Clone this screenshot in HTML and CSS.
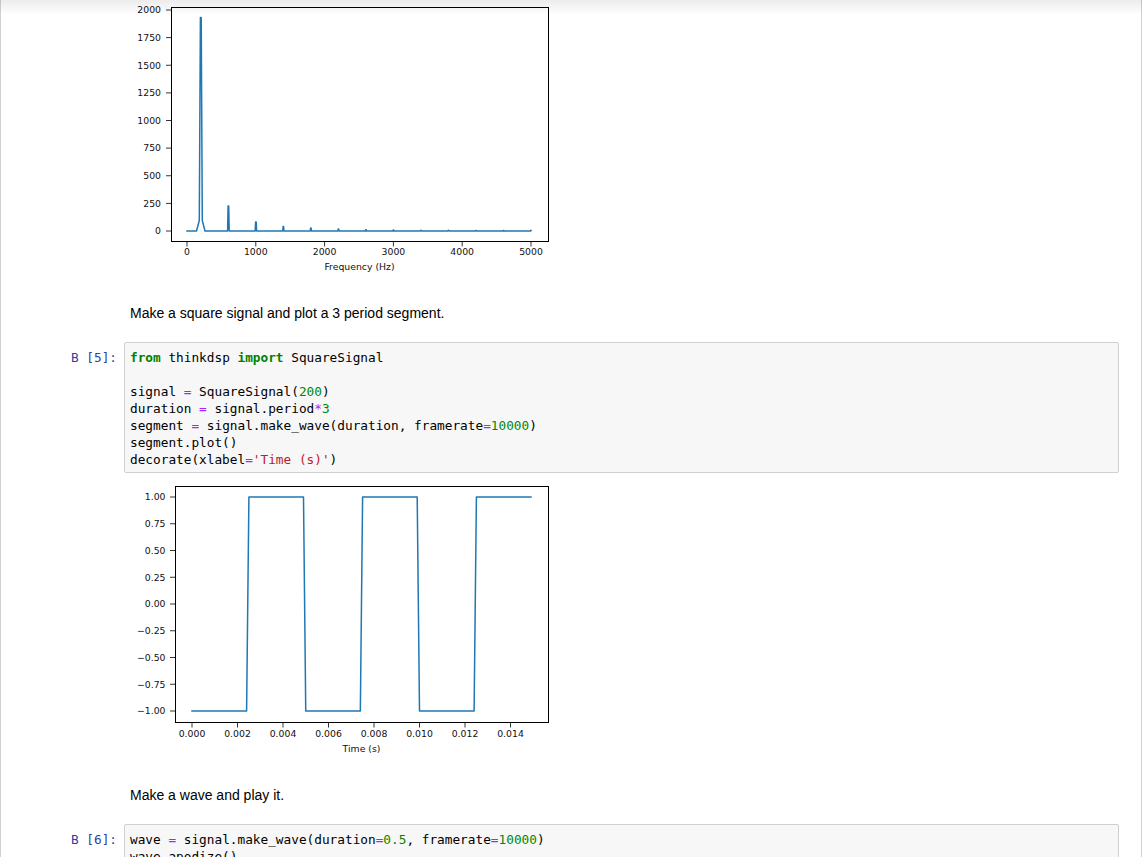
FILE: index.html
```html
<!DOCTYPE html>
<html lang="ru">
<head>
<meta charset="utf-8">
<title>Notebook</title>
<link rel="stylesheet" href="styles.css">
</head>
<body>
<div class="shade"></div>
<div class="notebook">
  <div class="out out1">
    <svg class="plot" width="430" height="278" viewBox="0 0 430 278">
      <polyline class="line" points="57,231 66.5,231 69.3,220.5 70.4,17.5 71.2,17.5 72.3,220.5 75,231 97.6,231 98.1,206 98.7,206 99.2,231 125.2,231 125.6,222 126.2,222 126.6,231 152.8,231 153.1,226.4 153.6,226.4 153.9,231 180.3,231 180.6,228 181.1,228 181.4,231 207.9,231 208.2,229 208.7,229 209,231 235.4,231 235.7,229.7 236.2,229.7 236.5,231 262.9,231 263.2,230 263.7,230 264,231 290.4,231 290.7,230.2 291.2,230.2 291.5,231 317.9,231 318.2,230.3 318.7,230.3 319,231 345.5,231 345.8,230.4 346.3,230.4 346.6,231 373,231 373.3,230.5 373.8,230.5 374.1,231 400.5,231 401,230.3"/>
      <rect class="frame" x="41.5" y="7.5" width="377" height="234"/>
      <path class="tick" d="M36 231H41M36 203.4H41M36 175.75H41M36 148.1H41M36 120.5H41M36 92.9H41M36 65.25H41M36 37.6H41M36 10H41M57 241.5V246.5M125.8 241.5V246.5M194.6 241.5V246.5M263.4 241.5V246.5M332.2 241.5V246.5M401 241.5V246.5"/>
      <g class="ylab">
        <text x="31" y="234.3">0</text>
        <text x="31" y="206.7">250</text>
        <text x="31" y="179.05">500</text>
        <text x="31" y="151.4">750</text>
        <text x="31" y="123.8">1000</text>
        <text x="31" y="96.2">1250</text>
        <text x="31" y="68.55">1500</text>
        <text x="31" y="40.9">1750</text>
        <text x="31" y="13.3">2000</text>
      </g>
      <g class="xlab">
        <text x="57" y="255">0</text>
        <text x="125.8" y="255">1000</text>
        <text x="194.6" y="255">2000</text>
        <text x="263.4" y="255">3000</text>
        <text x="332.2" y="255">4000</text>
        <text x="401" y="255">5000</text>
        <text x="229.5" y="269.5">Frequency (Hz)</text>
      </g>
    </svg>
  </div>

  <div class="md"><p>Make a square signal and plot a 3 period segment.</p></div>

  <div class="code-cell">
    <div class="prompt">В [5]:</div>
    <div class="input"><pre><span class="kw">from</span> thinkdsp <span class="kw">import</span> SquareSignal

signal <span class="op">=</span> SquareSignal(<span class="num">200</span>)
duration <span class="op">=</span> signal.period<span class="op">*</span><span class="num">3</span>
segment <span class="op">=</span> signal.make_wave(duration, framerate<span class="op">=</span><span class="num">10000</span>)
segment.plot()
decorate(xlabel<span class="op">=</span><span class="str">'Time (s)'</span>)</pre></div>
  </div>

  <div class="out out2">
    <svg class="plot" width="430" height="282" viewBox="0 0 430 282">
      <polyline class="line" points="62,233 116.6,233 118.9,19 173.5,19 175.75,233 230.35,233 232.6,19 287.2,19 289.5,233 344.1,233 346.4,19 401,19"/>
      <rect class="frame" x="45.5" y="8.5" width="373" height="236"/>
      <path class="tick" d="M40 19H45M40 45.75H45M40 72.5H45M40 99.25H45M40 126H45M40 152.75H45M40 179.5H45M40 206.25H45M40 233H45M62 244.5V249.5M107.5 244.5V249.5M153 244.5V249.5M198.5 244.5V249.5M244 244.5V249.5M289.5 244.5V249.5M335 244.5V249.5M380.5 244.5V249.5"/>
      <g class="ylab">
        <text x="35.5" y="22.3">1.00</text>
        <text x="35.5" y="49.05">0.75</text>
        <text x="35.5" y="75.8">0.50</text>
        <text x="35.5" y="102.55">0.25</text>
        <text x="35.5" y="129.3">0.00</text>
        <text x="35.5" y="156.05">−0.25</text>
        <text x="35.5" y="182.8">−0.50</text>
        <text x="35.5" y="209.55">−0.75</text>
        <text x="35.5" y="236.3">−1.00</text>
      </g>
      <g class="xlab">
        <text x="62" y="258.6">0.000</text>
        <text x="107.5" y="258.6">0.002</text>
        <text x="153" y="258.6">0.004</text>
        <text x="198.5" y="258.6">0.006</text>
        <text x="244" y="258.6">0.008</text>
        <text x="289.5" y="258.6">0.010</text>
        <text x="335" y="258.6">0.012</text>
        <text x="380.5" y="258.6">0.014</text>
        <text x="231.5" y="273.5">Time (s)</text>
      </g>
    </svg>
  </div>

  <div class="md"><p>Make a wave and play it.</p></div>

  <div class="code-cell">
    <div class="prompt">В [6]:</div>
    <div class="input"><pre>wave <span class="op">=</span> signal.make_wave(duration<span class="op">=</span><span class="num">0.5</span>, framerate<span class="op">=</span><span class="num">10000</span>)
wave.apodize()
wave.make_audio()</pre></div>
  </div>
</div>
</body>
</html>
```

FILE: styles.css
```css
html, body {
  margin: 0;
  padding: 0;
  background: #ffffff;
}

.shade {
  position: fixed;
  top: 0;
  left: 0;
  right: 0;
  height: 15px;
  background: linear-gradient(to bottom, rgba(0, 0, 0, 0.075), rgba(0, 0, 0, 0));
  pointer-events: none;
  z-index: 5;
}

.notebook {
  box-sizing: border-box;
  min-height: 100vh;
  border-left: 1px solid #d2d2d2;
  border-right: 1px solid #d2d2d2;
  background: #ffffff;
}

.out {
  padding-left: 129px;
}

.out2 {
  margin-top: 5px;
}

.plot {
  display: block;
}

.plot .line {
  fill: none;
  stroke: #1f77b4;
  stroke-width: 1.5;
  stroke-linejoin: round;
  stroke-linecap: square;
}

.plot .frame {
  fill: none;
  stroke: #000000;
  stroke-width: 1;
}

.plot .tick {
  fill: none;
  stroke: #000000;
  stroke-width: 0.8;
}

.plot text {
  font-family: "DejaVu Sans", sans-serif;
  font-size: 9.3px;
  fill: #111111;
}

.plot .ylab text {
  text-anchor: end;
}

.plot .xlab text {
  text-anchor: middle;
}

.md {
  margin-top: 25px;
  padding-left: 129px;
  font-family: "Liberation Sans", Arial, sans-serif;
  font-size: 14px;
  line-height: 20px;
  color: #000000;
}

.md p {
  margin: 0;
}

.code-cell {
  display: flex;
  align-items: flex-start;
  margin-top: 19px;
  margin-right: 22px;
}

.prompt {
  width: 116px;
  flex: none;
  padding-right: 7px;
  padding-top: 7px;
  text-align: right;
  color: #303f9f;
  font-family: "DejaVu Sans Mono", monospace;
  font-size: 12.75px;
  line-height: 17px;
  white-space: pre;
}

.input {
  flex: 1;
  background: #f7f7f7;
  border: 1px solid #cfcfcf;
  border-radius: 2px;
  padding: 6px 0 4px 5px;
}

.input pre {
  margin: 0;
  font-family: "DejaVu Sans Mono", monospace;
  font-size: 12.75px;
  line-height: 17px;
  color: #000000;
}

.kw {
  color: #008000;
  font-weight: bold;
}

.op {
  color: #aa22ff;
}

.num {
  color: #008800;
}

.str {
  color: #ba2121;
}
```
